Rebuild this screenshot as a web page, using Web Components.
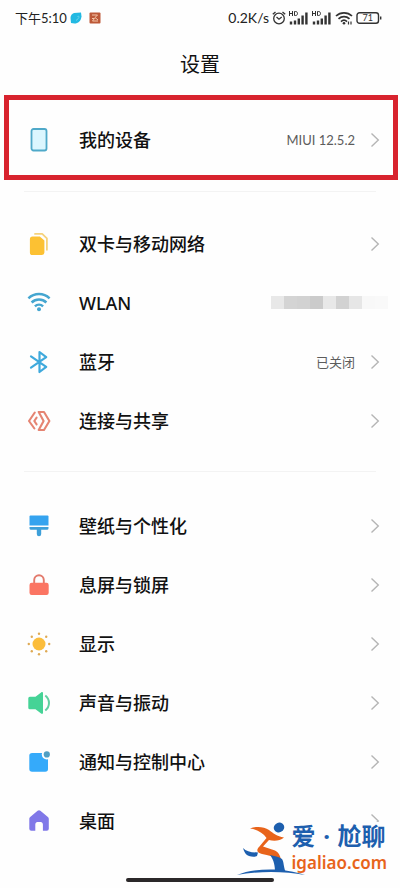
<!DOCTYPE html>
<html lang="zh-CN">
<head>
<meta charset="utf-8">
<meta name="viewport" content="width=device-width, initial-scale=1">
<title>设置</title>
<style>
  html, body { margin: 0; background: #fefefe; }
  body { font-family: "Noto Sans", "Noto Sans CJK SC", sans-serif; color: #111; }
</style>
</head>
<body>
<settings-page>
  <status-bar slot="status" time="下午5:10" speed="0.2K/s" battery="71"></status-bar>
  <settings-group highlighted>
    <settings-row icon="device" value="MIUI 12.5.2">我的设备</settings-row>
  </settings-group>
  <settings-group>
    <settings-row icon="sim">双卡与移动网络</settings-row>
    <settings-row icon="wifi" masked>WLAN</settings-row>
    <settings-row icon="bluetooth" value="已关闭">蓝牙</settings-row>
    <settings-row icon="share">连接与共享</settings-row>
  </settings-group>
  <settings-group>
    <settings-row icon="brush">壁纸与个性化</settings-row>
    <settings-row icon="lock">息屏与锁屏</settings-row>
    <settings-row icon="sun">显示</settings-row>
    <settings-row icon="sound">声音与振动</settings-row>
    <settings-row icon="notice">通知与控制中心</settings-row>
    <settings-row icon="home">桌面</settings-row>
  </settings-group>
  <site-mark slot="overlay"></site-mark>
</settings-page>

<script>
const ICONS = {
  device: '<rect x="4.500" y="1" width="15" height="21.500" rx="2" fill="#dbf6fe" stroke="#4fa9c9" stroke-width="1.800"/>',
  sim: '<path d="M8 1.900h7.200l4.700 4.500v11.400" fill="none" stroke="#f5d27c" stroke-width="1.800" stroke-linejoin="round" stroke-linecap="round"/><path d="M5.500 4.400h7.300l4.600 4.200v12a2.400 2.400 0 0 1-2.400 2.400H5.500a2.600 2.600 0 0 1-2.600-2.600V7a2.600 2.600 0 0 1 2.600-2.600z" fill="#fcc133"/>',
  wifi: '<g fill="none" stroke="#45a6d0" stroke-width="2.500"><path d="M1.400 7.300c6-5.600 15.200-5.600 21.200 0"/><path d="M4.600 11.500c4.300-4 10.500-4 14.800 0"/><path d="M7.900 15.400c2.400-2.200 5.800-2.200 8.200 0"/></g><circle cx="12" cy="18.200" r="2" fill="#45a6d0"/>',
  bluetooth: '<path d="M4 6.300l15.200 10.500-6.700 5.200V2l6.700 5.200L4 17.700" fill="none" stroke="#3fa9dc" stroke-width="2.200" stroke-linejoin="round" stroke-linecap="round"/>',
  share: '<g fill="none" stroke="#e58472" stroke-width="2.100" stroke-linejoin="round" stroke-linecap="round"><path d="M7.800 3.500L2 12l5.400 7.500M9.600 8.700L7.300 12l2.300 3.300"/><path d="M11.700 3H17l5.400 9L17 21h-5.300l4.900-9z"/></g>',
  brush: '<path d="M3.500 1.500h17a1 1 0 0 1 1 1v9h-19v-9a1 1 0 0 1 1-1z" fill="#35a3ef"/><path d="M2.500 13h19v1.300a1.500 1.500 0 0 1-1.500 1.500h-5.800V20a2.200 2.200 0 0 1-4.400 0v-4.200H4a1.500 1.500 0 0 1-1.500-1.500z" fill="#3d9fd9"/>',
  lock: '<path d="M7.200 12V7a4.800 4.800 0 0 1 9.600 0v5" fill="none" stroke="#e3796b" stroke-width="1.900"/><rect x="2.500" y="9.800" width="19.200" height="12.200" rx="2.200" fill="#fb7563"/>',
  sun: '<circle cx="12" cy="12" r="6.500" fill="#fbbd3c"/><g fill="#dfaa55"><circle cx="12" cy="1.800" r="1.200"/><circle cx="12" cy="22.200" r="1.200"/><circle cx="1.800" cy="12" r="1.200"/><circle cx="22.200" cy="12" r="1.200"/><circle cx="4.800" cy="4.800" r="1.200"/><circle cx="19.200" cy="4.800" r="1.200"/><circle cx="4.800" cy="19.200" r="1.200"/><circle cx="19.200" cy="19.200" r="1.200"/></g>',
  sound: '<path d="M2.800 5.700h5.700l5.600-4.300c1-.8 1.900-.3 1.900.8v19.600c0 1.100-.9 1.600-1.900.8l-5.600-4.300H2.800a1.500 1.500 0 0 1-1.500-1.500V7.200a1.500 1.500 0 0 1 1.500-1.500z" fill="#45d396"/><path d="M18.300 4.500c4.900 4 4.900 11 0 15" fill="none" stroke="#62cfa1" stroke-width="2"/>',
  notice: '<rect x="2.300" y="3" width="18.700" height="18.800" rx="2.800" fill="#35aafa"/><circle cx="19.800" cy="4.400" r="5" fill="#fefefe"/><circle cx="19.800" cy="4.400" r="3.100" fill="#4f9fc4"/>',
  home: '<path d="M10.600 1.800a2.200 2.200 0 0 1 2.800 0l7.200 6c.8.700 1.200 1.300 1.200 2.300v9.600a2 2 0 0 1-2 2h-3.900v-6.200c0-1.500-1-2.400-2.100-2.400h-3.400c-1.100 0-2.100.9-2.100 2.400v6.200H4.300a2 2 0 0 1-2-2v-9.600c0-1 .4-1.600 1.200-2.300z" fill="#8078e8"/>'
};

const attach = (host, html) => { host.attachShadow({ mode: 'open' }).innerHTML = html; };

class SettingsPage extends HTMLElement {
  constructor() {
    super();
    attach(this, `<style>
      :host { display: flex; flex-direction: column; position: relative; min-height: 100vh; }
      h1 { margin: 0; padding: 13px 0 14px; font-size: 20px; line-height: 32px; font-weight: 400; text-align: center; }
      .bar { width: 37%; height: 4px; border-radius: 2px; background: #2b2829; margin: auto auto 6px; }
    </style>
    <slot name="status"></slot>
    <h1>设置</h1>
    <main><slot></slot></main>
    <div class="bar"></div>
    <slot name="overlay"></slot>`);
  }
}

class StatusBar extends HTMLElement {
  constructor() {
    super();
    const signal = `<svg width="20" height="14" viewBox="0 0 20 14" aria-hidden="true">
      <path d="M.5 0v5M3.500 0v5M.5 2.500h3M5.500.5v4h1.200c2.400 0 2.400-4 0-4z" fill="none" stroke="#333"/>
      <path d="M2 13.500v-3M6 13.500v-4M9.800 13.500v-6M13.600 13.500V4.500M17.400 13.500V1.500" stroke="#333" stroke-width="2.400"/></svg>`;
    attach(this, `<style>
      :host { display: flex; align-items: center; justify-content: space-between; height: 36px; padding: 0 18px 0 15px; font-family: Lato, "Noto Sans CJK SC", sans-serif; font-size: 13px; line-height: 20px; color: #222; }
      div { display: flex; align-items: center; gap: 3px; }
      .speed { font-size: 14px; }
      svg { display: block; flex: none; }
      .left svg + svg { margin-left: 4px; }
    </style>
    <div class="left"><span>${this.getAttribute('time')}</span>
      <svg width="12" height="12" viewBox="0 0 12 12" aria-hidden="true"><path d="M4 1l7-.5.5 4C11 9 8 11.500 4.500 11.500L1 11 .5 6C.5 3.500 2 1.500 4 1z" fill="#22b9e2"/><path d="M7.500 4.500c1.800-.8 2 .6.800 2L6 8.500" stroke="#6dd5ec" fill="none"/></svg>
      <svg width="12" height="12" viewBox="0 0 12 12" aria-hidden="true"><rect x=".5" y=".5" width="11" height="11" rx="1" fill="#bd5938"/><path d="M3 3h5.500L6 5.500 9 8M3 6.500h2.500L3.500 9H9" stroke="#f5c6a8" fill="none"/></svg>
    </div>
    <div><span class="speed">${this.getAttribute('speed')}</span>
      <svg width="14" height="14" viewBox="0 0 14 14" fill="none" stroke="#333" stroke-width="1.300" aria-hidden="true"><circle cx="7" cy="7.500" r="5.300"/><path d="M.8 3.300L3.500.9M13.200 3.300L10.500.9M4.500 6L7 8.200 9.700 6"/></svg>
      ${signal}${signal}
      <svg width="18" height="14" viewBox="0 0 18 14" fill="none" stroke="#333" stroke-width="1.700" aria-hidden="true"><path d="M1 5c4.500-4.300 11.500-4.300 16 0M3.500 7.800c3.200-3 7.800-3 11 0M6 10.600c1.800-1.700 4.200-1.700 6 0"/><circle cx="9" cy="12.300" r="1.300" fill="#333" stroke="none"/><path d="M13.500 13.500v-3M16 13.500v-3" stroke-width="1.200"/></svg>
      <svg width="26" height="12" viewBox="0 0 26 12" role="img"><rect x="1" y=".8" width="21.500" height="10.400" rx="2.500" fill="none" stroke="#333" stroke-width="1.400"/><path d="M24.700 4.500v3" stroke="#333" stroke-width="1.400"/><text x="11.700" y="9.300" font-size="9" text-anchor="middle" fill="#333">${this.getAttribute('battery')}</text></svg>
    </div>`);
  }
}

class SettingsGroup extends HTMLElement {
  constructor() {
    super();
    attach(this, `<style>
      :host { display: block; }
      :host(:not([highlighted])) { padding: 22px 0 24px; }
      :host([highlighted]) .box { margin: 0 2px 11px 4px; border: 5px solid #d8232e; padding: 10px 0 6px; --row-start: 18px; --row-end: 13px; }
      hr { margin: 0 24px; border: 0; height: 1px; background: #f3f3f3; }
      :host(:not([highlighted])) hr { margin-top: 21px; margin-bottom: -22px; }
      :host(:last-of-type) hr { display: none; }
      :host(:last-of-type) { padding-bottom: 0 !important; }
    </style>
    <div class="box"><slot></slot></div><hr>`);
  }
}

class SettingsRow extends HTMLElement {
  constructor() {
    super();
    const value = this.getAttribute('value');
    const tail = this.hasAttribute('masked')
      ? '<span class="mask">' + ['#e8e8e8','#d4d4d4','#d2d2d2','#cbcbcb','#e8e8e8','#d2d2d2','#e6e6e6','#f8f8f8','#f9f9f9'].map(c => `<i style="background:${c}"></i>`).join('') + '</span>'
      : (value ? `<span class="value">${value}</span>` : '') + '<svg class="chev" width="10" height="16" viewBox="0 0 10 16" aria-hidden="true"><path d="M1.500 1.500L8.300 8l-6.800 6.500" fill="none" stroke="#b5b5b5" stroke-width="1.400"/></svg>';
    attach(this, `<style>
      :host { display: block; }
      a { display: flex; align-items: center; height: 59px; padding: 0 var(--row-end, 20px) 0 var(--row-start, 27px); color: inherit; text-decoration: none; }
      .icon { flex: none; margin-right: 28px; }
      .label { flex: 1; font-size: 18px; line-height: 26px; font-weight: 500; }
      .value { font-family: Lato, "Noto Sans CJK SC", sans-serif; font-size: 13px; line-height: 20px; color: #5c5c5c; margin-right: 15px; }
      .mask { display: flex; margin-right: -8px; }
      .mask i { width: 13px; height: 13px; }
      svg { display: block; }
    </style>
    <a href="#${this.getAttribute('icon')}">
      <svg class="icon" width="24" height="24" viewBox="0 0 24 24" aria-hidden="true">${ICONS[this.getAttribute('icon')]}</svg>
      <span class="label"><slot></slot></span>${tail}
    </a>`);
  }
}

class SiteMark extends HTMLElement {
  constructor() {
    super();
    attach(this, `<style>
      :host { position: absolute; right: 13px; bottom: 12px; display: flex; align-items: flex-end; }
      svg { display: block; position: relative; z-index: 1; margin-right: -15px; }
      .words { background: #fefefe; }
      .name { display: flex; font-size: 24px; line-height: 28px; font-weight: 700; color: #1d5fae; }
      .name i { width: 22px; text-align: center; font-style: normal; }
      .url { font-size: 17px; line-height: 26px; font-weight: 600; color: #e8641b; }
    </style>
    <svg width="70" height="54" viewBox="0 0 70 54" aria-hidden="true">
      <ellipse cx="42" cy="5.500" rx="5.300" ry="4.800" transform="rotate(-25 42 5.500)" fill="#1d5fae"/>
      <path d="M13 6.500C19 4 27 4.500 32 8c4 3 8 6.500 15 7.500-4 3.500-10 4-15 2.500l-6 6.500 12 4c3.500 1.500 5 4.500 6 9-6-3-13-4-19-5.500-5-1.500-6-4-3-7l7.500-9C26 11 20 7.500 13 6.500z" fill="#e8641b"/>
      <path d="M6 26c3 3.500 8 4.500 15 4.500L20 34c-2 1-5 1-8 0-3-1-5-4-6-8z" fill="#1d5fae"/>
      <path d="M33 33c4 1 9 1.500 12 4 2 3 1.500 8 3.500 12.500H38c0-5-1-11.500-5-16.500z" fill="#1d5fae"/>
      <path d="M0 53c18-7.500 48-7.500 68 0-20-4-48-4-68 0z" fill="#1d5fae"/>
    </svg>
    <div class="words"><div class="name"><span>爱</span><i>·</i><span>尬聊</span></div><div class="url">igaliao.com</div></div>`);
  }
}

customElements.define('settings-page', SettingsPage);
customElements.define('status-bar', StatusBar);
customElements.define('settings-group', SettingsGroup);
customElements.define('settings-row', SettingsRow);
customElements.define('site-mark', SiteMark);
</script>
</body>
</html>
